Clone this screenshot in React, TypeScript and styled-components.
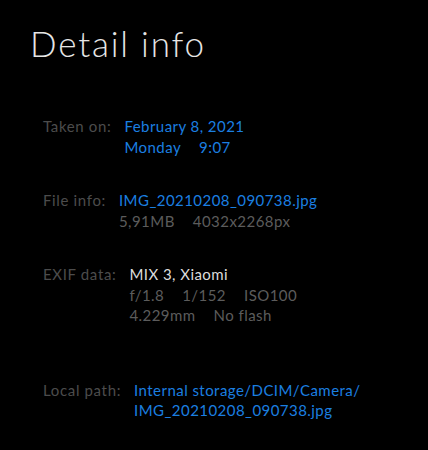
import React from 'react'
import styled, { createGlobalStyle } from 'styled-components'

const GlobalStyle = createGlobalStyle`
  html, body {
    margin: 0;
    padding: 0;
    background: #000;
  }
  body {
    font-family: Lato, 'Noto Sans', 'Liberation Sans', sans-serif;
    -webkit-font-smoothing: antialiased;
  }
`

const Page = styled.div`
  width: 428px;
  height: 450px;
  background: #000;
  box-sizing: border-box;
  padding: 22px 0 0 0;
  overflow: hidden;
`

const Title = styled.h1`
  margin: 0 0 0 30px;
  font-size: 35px;
  line-height: 42px;
  font-weight: 300;
  color: #e6e6e6;
  letter-spacing: 1.8px;
`

const Sections = styled.div`
  display: flex;
  flex-direction: column;
  padding: 52px 0 0 43px;
`

const Section = styled.div<{ $gap: number }>`
  display: flex;
  flex-direction: row;
  gap: 13px;
  margin-bottom: ${({ $gap }) => $gap}px;
  font-size: 15px;
  line-height: 20.5px;
  letter-spacing: 0.45px;
`

const Label = styled.div`
  color: #4c4c4c;
  white-space: nowrap;
  letter-spacing: 0.65px;
`

const Values = styled.div`
  display: flex;
  flex-direction: column;
`

type Tone = 'blue' | 'white' | 'gray'

const toneColor: Record<Tone, string> = {
  blue: '#1b7fe0',
  white: '#dcdcdc',
  gray: '#5c5c5c',
}

const Line = styled.div<{ $tone: Tone }>`
  display: flex;
  gap: 18px;
  color: ${({ $tone }) => toneColor[$tone]};
  white-space: nowrap;
`

type Row = { tone: Tone; parts: string[] }
type Info = { label: string; rows: Row[]; gap: number }

const info: Info[] = [
  {
    label: 'Taken on:',
    gap: 33,
    rows: [
      { tone: 'blue', parts: ['February 8, 2021'] },
      { tone: 'blue', parts: ['Monday', '9:07'] },
    ],
  },
  {
    label: 'File info:',
    gap: 33,
    rows: [
      { tone: 'blue', parts: ['IMG_20210208_090738.jpg'] },
      { tone: 'gray', parts: ['5,91MB', '4032x2268px'] },
    ],
  },
  {
    label: 'EXIF data:',
    gap: 54,
    rows: [
      { tone: 'white', parts: ['MIX 3, Xiaomi'] },
      { tone: 'gray', parts: ['f/1.8', '1/152', 'ISO100'] },
      { tone: 'gray', parts: ['4.229mm', 'No flash'] },
    ],
  },
  {
    label: 'Local path:',
    gap: 0,
    rows: [
      { tone: 'blue', parts: ['Internal storage/DCIM/Camera/'] },
      { tone: 'blue', parts: ['IMG_20210208_090738.jpg'] },
    ],
  },
]

export default function App() {
  return (
    <Page>
      <GlobalStyle />
      <Title>Detail info</Title>
      <Sections>
        {info.map((item) => (
          <Section key={item.label} $gap={item.gap}>
            <Label>{item.label}</Label>
            <Values>
              {item.rows.map((row, i) => (
                <Line key={i} $tone={row.tone}>
                  {row.parts.map((p) => (
                    <span key={p}>{p}</span>
                  ))}
                </Line>
              ))}
            </Values>
          </Section>
        ))}
      </Sections>
    </Page>
  )
}
